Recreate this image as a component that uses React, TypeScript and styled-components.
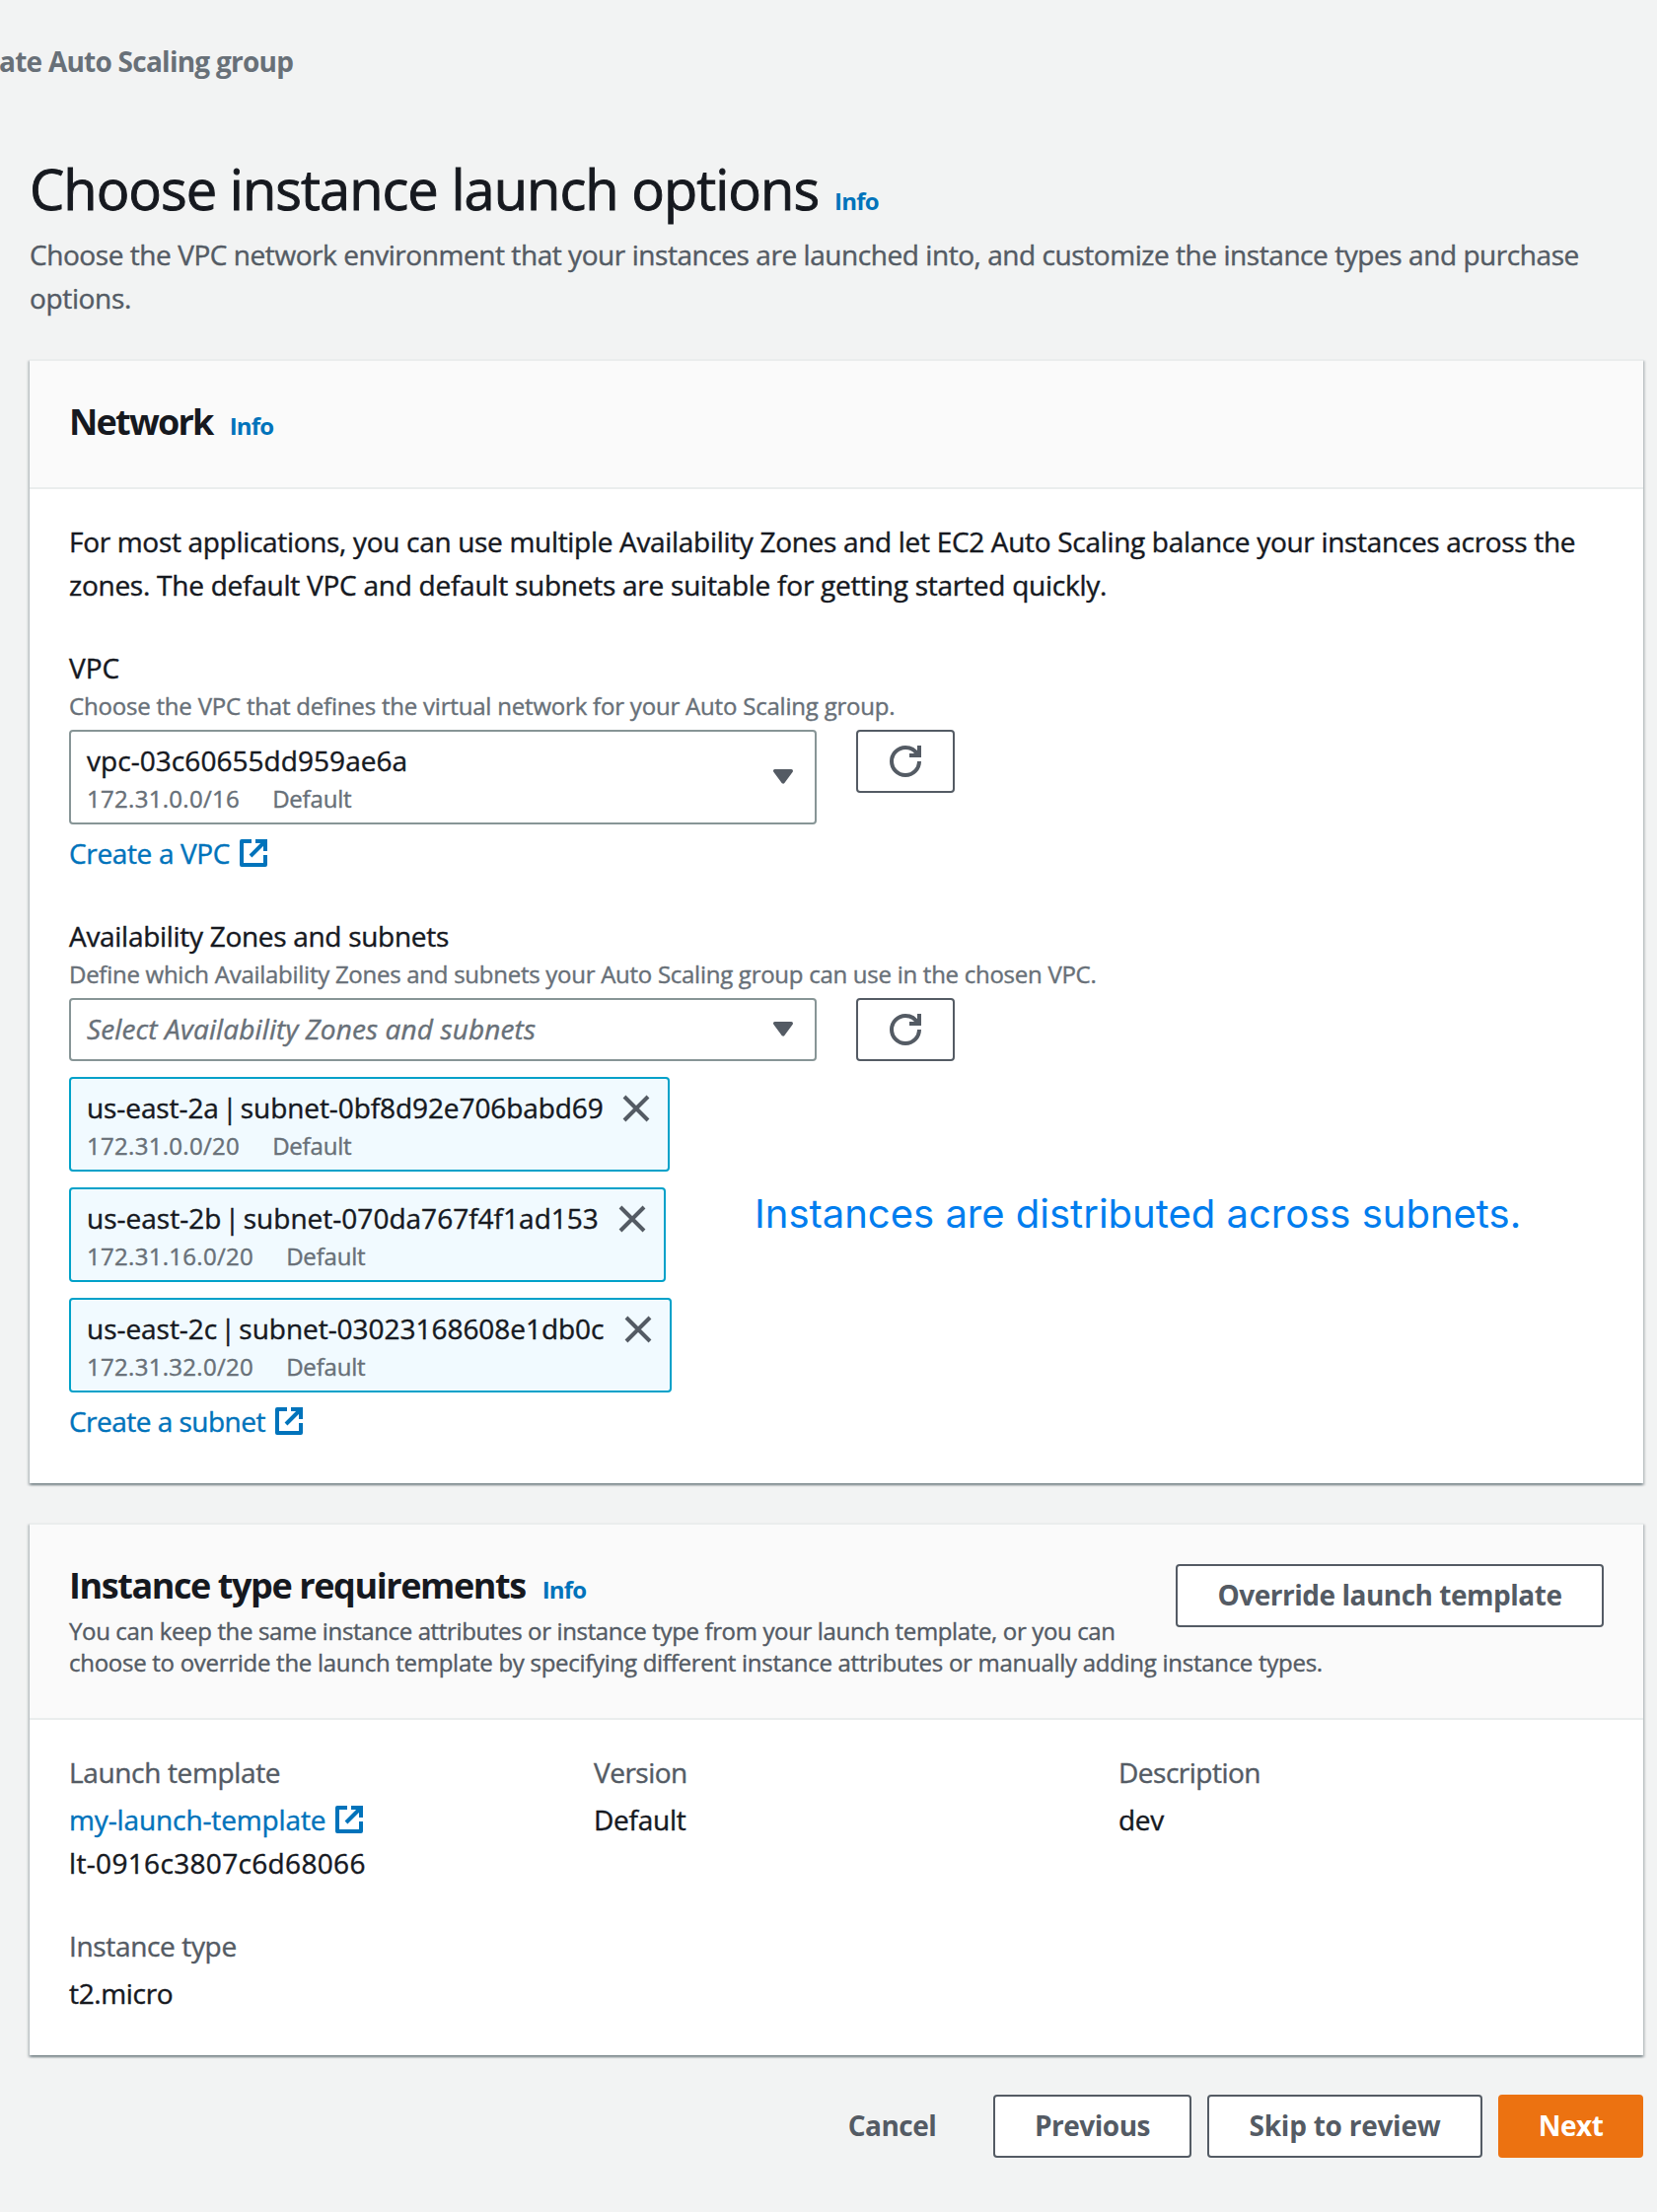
import React from "react";
import styled, { createGlobalStyle, css } from "styled-components";

const color = {
  page: "#f2f3f3",
  ink: "#16191f",
  secondary: "#545b64",
  muted: "#687078",
  link: "#0073bb",
  line: "#eaeded",
  control: "#879596",
  token: "#00a1c9",
  tokenFill: "#f1faff",
  accent: "#ec7211",
  note: "#007dee",
};

const GlobalStyle = createGlobalStyle`
  *, *::before, *::after { box-sizing: border-box; }
  body {
    margin: 0;
    background: ${color.page};
    color: ${color.ink};
    font-family: "Open Sans", "Noto Sans", sans-serif;
    font-size: 28px;
    line-height: 44px;
    overflow-x: hidden;
  }
`;

type Tracked = { $track?: number; $word?: number };

const tracking = css<Tracked>`
  letter-spacing: ${({ $track = -0.35 }) => $track}px;
  word-spacing: ${({ $word = 0 }) => $word}px;
`;

const Page = styled.main`
  display: flex;
  flex-direction: column;
  width: 1680px;
  min-height: 2243px;
  padding: 40px 14px 54px 30px;
`;

const Breadcrumb = styled.nav<Tracked>`
  margin-left: -31px;
  color: ${color.muted};
  font-weight: 700;
  white-space: nowrap;
  ${tracking}
`;

const PageHeading = styled.header`
  margin-top: 71px;
`;

const TitleRow = styled.div<{ $gap: number }>`
  display: flex;
  align-items: baseline;
  gap: ${({ $gap }) => $gap}px;
`;

const PageTitle = styled.h1<Tracked>`
  margin: 0;
  font-size: 56px;
  font-weight: 400;
  line-height: 72px;
  white-space: nowrap;
  -webkit-text-stroke: 0.9px;
  ${tracking}
`;

const InfoLink = styled.a`
  color: ${color.link};
  font-size: 24px;
  font-weight: 700;
  line-height: 33px;
  letter-spacing: -0.8px;
`;

const Line = styled.span<Tracked>`
  display: block;
  white-space: nowrap;
  -webkit-text-stroke: 0.4px;
  ${tracking}
`;

const PageDescription = styled.p`
  margin: 9px 0 0;
  color: ${color.secondary};
`;

const Card = styled.section`
  margin-top: 40px;
  border-top: 2px solid ${color.line};
  background: #fff;
  box-shadow: 0 2px 2px 0 rgba(0, 28, 36, 0.3), 2px 2px 2px 0 rgba(0, 28, 36, 0.15),
    -2px 2px 2px 0 rgba(0, 28, 36, 0.15);
`;

const CardHeader = styled.header<{ $bottom: number }>`
  padding: 39px 40px ${({ $bottom }) => $bottom}px;
  border-bottom: 2px solid ${color.line};
  background: #fafafa;
`;

const CardTitle = styled.h2<Tracked>`
  margin: 0;
  font-size: 36px;
  font-weight: 700;
  line-height: 45px;
  white-space: nowrap;
  ${tracking}
`;

const CardDescription = styled.p`
  margin: 8px 0 0;
  color: ${color.secondary};
  font-size: 24px;
  line-height: 32px;
`;

const CardBody = styled.div`
  padding: 31px 40px 41px;
`;

const Intro = styled.p`
  margin: 0;
`;

const Field = styled.div`
  margin-top: 40px;
`;

const Hint = styled.div`
  margin-bottom: 8px;
  color: ${color.muted};
  font-size: 24px;
  line-height: 33px;
`;

const ControlRow = styled.div`
  display: flex;
  align-items: flex-start;
  gap: 40px;
`;

const Select = styled.div<{ $tall?: boolean }>`
  display: flex;
  align-items: center;
  justify-content: space-between;
  width: 758px;
  height: ${({ $tall }) => ($tall ? 96 : 64)}px;
  padding: 0 22px 0 16px;
  border: 2px solid ${color.control};
  border-radius: 4px;
  background: #fff;
`;

const SelectText = styled.div`
  margin-top: -1px;
`;

const Placeholder = styled.div<Tracked>`
  margin-top: -2px;
  color: ${color.muted};
  font-style: italic;
  white-space: nowrap;
  -webkit-text-stroke: 0.4px;
  ${tracking}
`;

const Meta = styled.div`
  display: flex;
  gap: 33px;
  color: ${color.muted};
  font-size: 24px;
  line-height: 33px;
`;

const baseButton = css`
  display: flex;
  align-items: center;
  justify-content: center;
  height: 64px;
  margin: 0;
  border: 2px solid ${color.secondary};
  border-radius: 4px;
  background: #fff;
  color: ${color.secondary};
  font-family: inherit;
`;

const IconButton = styled.button`
  ${baseButton}
  width: 100px;
  padding: 0;
`;

const Button = styled.button<Tracked & { $width: number; $variant?: "primary" | "link" }>`
  ${baseButton}
  width: ${({ $width }) => $width}px;
  padding: 0 0 2px;
  font-size: 28px;
  font-weight: 700;
  line-height: 44px;
  white-space: nowrap;
  ${tracking}
  ${({ $variant }) =>
    $variant === "primary" &&
    css`
      border-color: ${color.accent};
      background: ${color.accent};
      color: #fff;
    `}
  ${({ $variant }) =>
    $variant === "link" &&
    css`
      border-color: transparent;
      background: transparent;
    `}
`;

const HeaderAction = styled.div`
  float: right;
  margin: 1px 0 0 40px;
`;

const ExternalAnchor = styled.a<{ $gap: number; $top?: number }>`
  display: flex;
  align-items: center;
  gap: ${({ $gap }) => $gap}px;
  width: max-content;
  margin-top: ${({ $top = 0 }) => $top}px;
  color: ${color.link};
`;

const TokenArea = styled.div`
  display: flex;
  align-items: flex-start;
  margin-top: 16px;
`;

const TokenList = styled.div`
  display: flex;
  flex: 0 0 695px;
  flex-direction: column;
  gap: 16px;
`;

const TokenBox = styled.div<{ $width: number }>`
  display: flex;
  justify-content: space-between;
  width: ${({ $width }) => $width}px;
  height: 96px;
  padding: 7px 18px 0 16px;
  border: 2px solid ${color.token};
  border-radius: 4px;
  background: ${color.tokenFill};
`;

const Dismiss = styled.button`
  display: flex;
  height: 28px;
  margin: 9px 0 0;
  padding: 0;
  border: 0;
  background: none;
`;

const Note = styled.p`
  margin: 114px 0 0;
  color: ${color.note};
  font-family: Inter, sans-serif;
  font-size: 40px;
  line-height: 49px;
  white-space: nowrap;
`;

const Summary = styled.dl`
  display: grid;
  grid-template-columns: repeat(3, 492px);
  gap: 40px;
  margin: 0;
`;

const Term = styled.dt`
  margin-bottom: 4px;
  color: ${color.secondary};
`;

const Detail = styled.dd`
  margin: 0;
`;

const Footer = styled.footer`
  display: flex;
  justify-content: flex-end;
  gap: 16px;
  margin-top: 40px;
`;

const CaretIcon = () => (
  <svg width="20" height="16" viewBox="0 0 20 16">
    <path d="M1.7 1.7h16.6L10 13z" fill={color.secondary} stroke={color.secondary} strokeWidth="3.4" strokeLinejoin="round" />
  </svg>
);

const RefreshIcon = () => (
  <svg width="32" height="32" viewBox="0 0 16 16" fill="none" stroke={color.secondary} strokeWidth="2">
    <path d="M15 8a7 7 0 1 1-7-7c2.8 0 5.2 1.6 6.3 4" />
    <path d="M10 5h5V0" />
  </svg>
);

const ExternalIcon = () => (
  <svg width="28" height="28" viewBox="0 0 28 28" fill="none" stroke={color.link} strokeWidth="4">
    <path d="M12 2H2v24h24V16" strokeLinejoin="round" />
    <path d="M16 2h10v10M26 2 11 17" />
  </svg>
);

const CloseIcon = () => (
  <svg width="28" height="28" viewBox="0 0 28 28" fill="none" stroke={color.secondary} strokeWidth="4">
    <path d="M2 2l24 24M26 2 2 26" />
  </svg>
);

const subnets = [
  { name: "us-east-2a | subnet-0bf8d92e706babd69", cidr: "172.31.0.0/20", width: 609, track: -0.09 },
  { name: "us-east-2b | subnet-070da767f4f1ad153", cidr: "172.31.16.0/20", width: 605, track: 0.01 },
  { name: "us-east-2c | subnet-03023168608e1db0c", cidr: "172.31.32.0/20", width: 611, track: -0.04 },
];

export default function App() {
  return (
    <>
      <GlobalStyle />
      <Page>
        <Breadcrumb $track={-0.75}>ate Auto Scaling group</Breadcrumb>
        <PageHeading>
          <TitleRow $gap={16}>
            <PageTitle $track={-0.98}>Choose instance launch options</PageTitle>
            <InfoLink>Info</InfoLink>
          </TitleRow>
          <PageDescription>
            <Line $track={-0.44}>
              Choose the VPC network environment that your instances are launched into, and customize the instance types
              and purchase
            </Line>
            <Line>options.</Line>
          </PageDescription>
        </PageHeading>

        <Card>
          <CardHeader $bottom={44}>
            <TitleRow $gap={17}>
              <CardTitle $track={-1.75}>Network</CardTitle>
              <InfoLink>Info</InfoLink>
            </TitleRow>
          </CardHeader>
          <CardBody>
            <Intro>
              <Line $track={-0.315}>
                For most applications, you can use multiple Availability Zones and let EC2 Auto Scaling balance your
                instances across the
              </Line>
              <Line $track={-0.25}>
                zones. The default VPC and default subnets are suitable for getting started quickly.
              </Line>
            </Intro>

            <Field>
              <Line $track={0}>VPC</Line>
              <Hint>
                <Line $track={-0.2}>Choose the VPC that defines the virtual network for your Auto Scaling group.</Line>
              </Hint>
              <ControlRow>
                <Select $tall>
                  <SelectText>
                    <Line $track={0.05}>vpc-03c60655dd959ae6a</Line>
                    <Meta>
                      <Line $track={0.3}>172.31.0.0/16</Line>
                      <Line $track={-0.2}>Default</Line>
                    </Meta>
                  </SelectText>
                  <CaretIcon />
                </Select>
                <IconButton aria-label="Refresh">
                  <RefreshIcon />
                </IconButton>
              </ControlRow>
              <ExternalAnchor $gap={10} $top={7}>
                <Line>Create a VPC</Line>
                <ExternalIcon />
              </ExternalAnchor>
            </Field>

            <Field>
              <Line $track={-0.3}>Availability Zones and subnets</Line>
              <Hint>
                <Line $track={-0.27}>
                  Define which Availability Zones and subnets your Auto Scaling group can use in the chosen VPC.
                </Line>
              </Hint>
              <ControlRow>
                <Select>
                  <Placeholder $track={0.12}>Select Availability Zones and subnets</Placeholder>
                  <CaretIcon />
                </Select>
                <IconButton aria-label="Refresh">
                  <RefreshIcon />
                </IconButton>
              </ControlRow>
              <TokenArea>
                <TokenList>
                  {subnets.map((s) => (
                    <TokenBox key={s.name} $width={s.width}>
                      <div>
                        <Line $track={s.track} $word={-3.8}>
                          {s.name}
                        </Line>
                        <Meta>
                          <Line $track={0.3}>{s.cidr}</Line>
                          <Line $track={-0.2}>Default</Line>
                        </Meta>
                      </div>
                      <Dismiss aria-label="Remove">
                        <CloseIcon />
                      </Dismiss>
                    </TokenBox>
                  ))}
                </TokenList>
                <Note>Instances are distributed across subnets.</Note>
              </TokenArea>
              <ExternalAnchor $gap={10} $top={7}>
                <Line $track={-0.52}>Create a subnet</Line>
                <ExternalIcon />
              </ExternalAnchor>
            </Field>
          </CardBody>
        </Card>

        <Card>
          <CardHeader $bottom={40}>
            <HeaderAction>
              <Button $width={434} $track={-0.49}>
                Override launch template
              </Button>
            </HeaderAction>
            <TitleRow $gap={17}>
              <CardTitle $track={-1.42}>Instance type requirements</CardTitle>
              <InfoLink>Info</InfoLink>
            </TitleRow>
            <CardDescription>
              <Line $track={-0.36}>
                You can keep the same instance attributes or instance type from your launch template, or you can
              </Line>
              <Line $track={-0.28}>
                choose to override the launch template by specifying different instance attributes or manually adding
                instance types.
              </Line>
            </CardDescription>
          </CardHeader>
          <CardBody>
            <Summary>
              <div>
                <Term>
                  <Line>Launch template</Line>
                </Term>
                <Detail>
                  <ExternalAnchor $gap={10}>
                    <Line $track={-0.12}>my-launch-template</Line>
                    <ExternalIcon />
                  </ExternalAnchor>
                  <Line $track={0.33}>lt-0916c3807c6d68066</Line>
                </Detail>
              </div>
              <div>
                <Term>
                  <Line $track={-0.5}>Version</Line>
                </Term>
                <Detail>
                  <Line $track={-0.25}>Default</Line>
                </Detail>
              </div>
              <div>
                <Term>
                  <Line $track={-0.5}>Description</Line>
                </Term>
                <Detail>
                  <Line>dev</Line>
                </Detail>
              </div>
              <div>
                <Term>
                  <Line>Instance type</Line>
                </Term>
                <Detail>
                  <Line>t2.micro</Line>
                </Detail>
              </div>
            </Summary>
          </CardBody>
        </Card>

        <Footer>
          <Button $width={173} $track={-0.49} $variant="link">
            Cancel
          </Button>
          <Button $width={201} $track={-0.49}>
            Previous
          </Button>
          <Button $width={279} $track={-0.25}>
            Skip to review
          </Button>
          <Button $width={147} $track={-0.49} $variant="primary">
            Next
          </Button>
        </Footer>
      </Page>
    </>
  );
}
